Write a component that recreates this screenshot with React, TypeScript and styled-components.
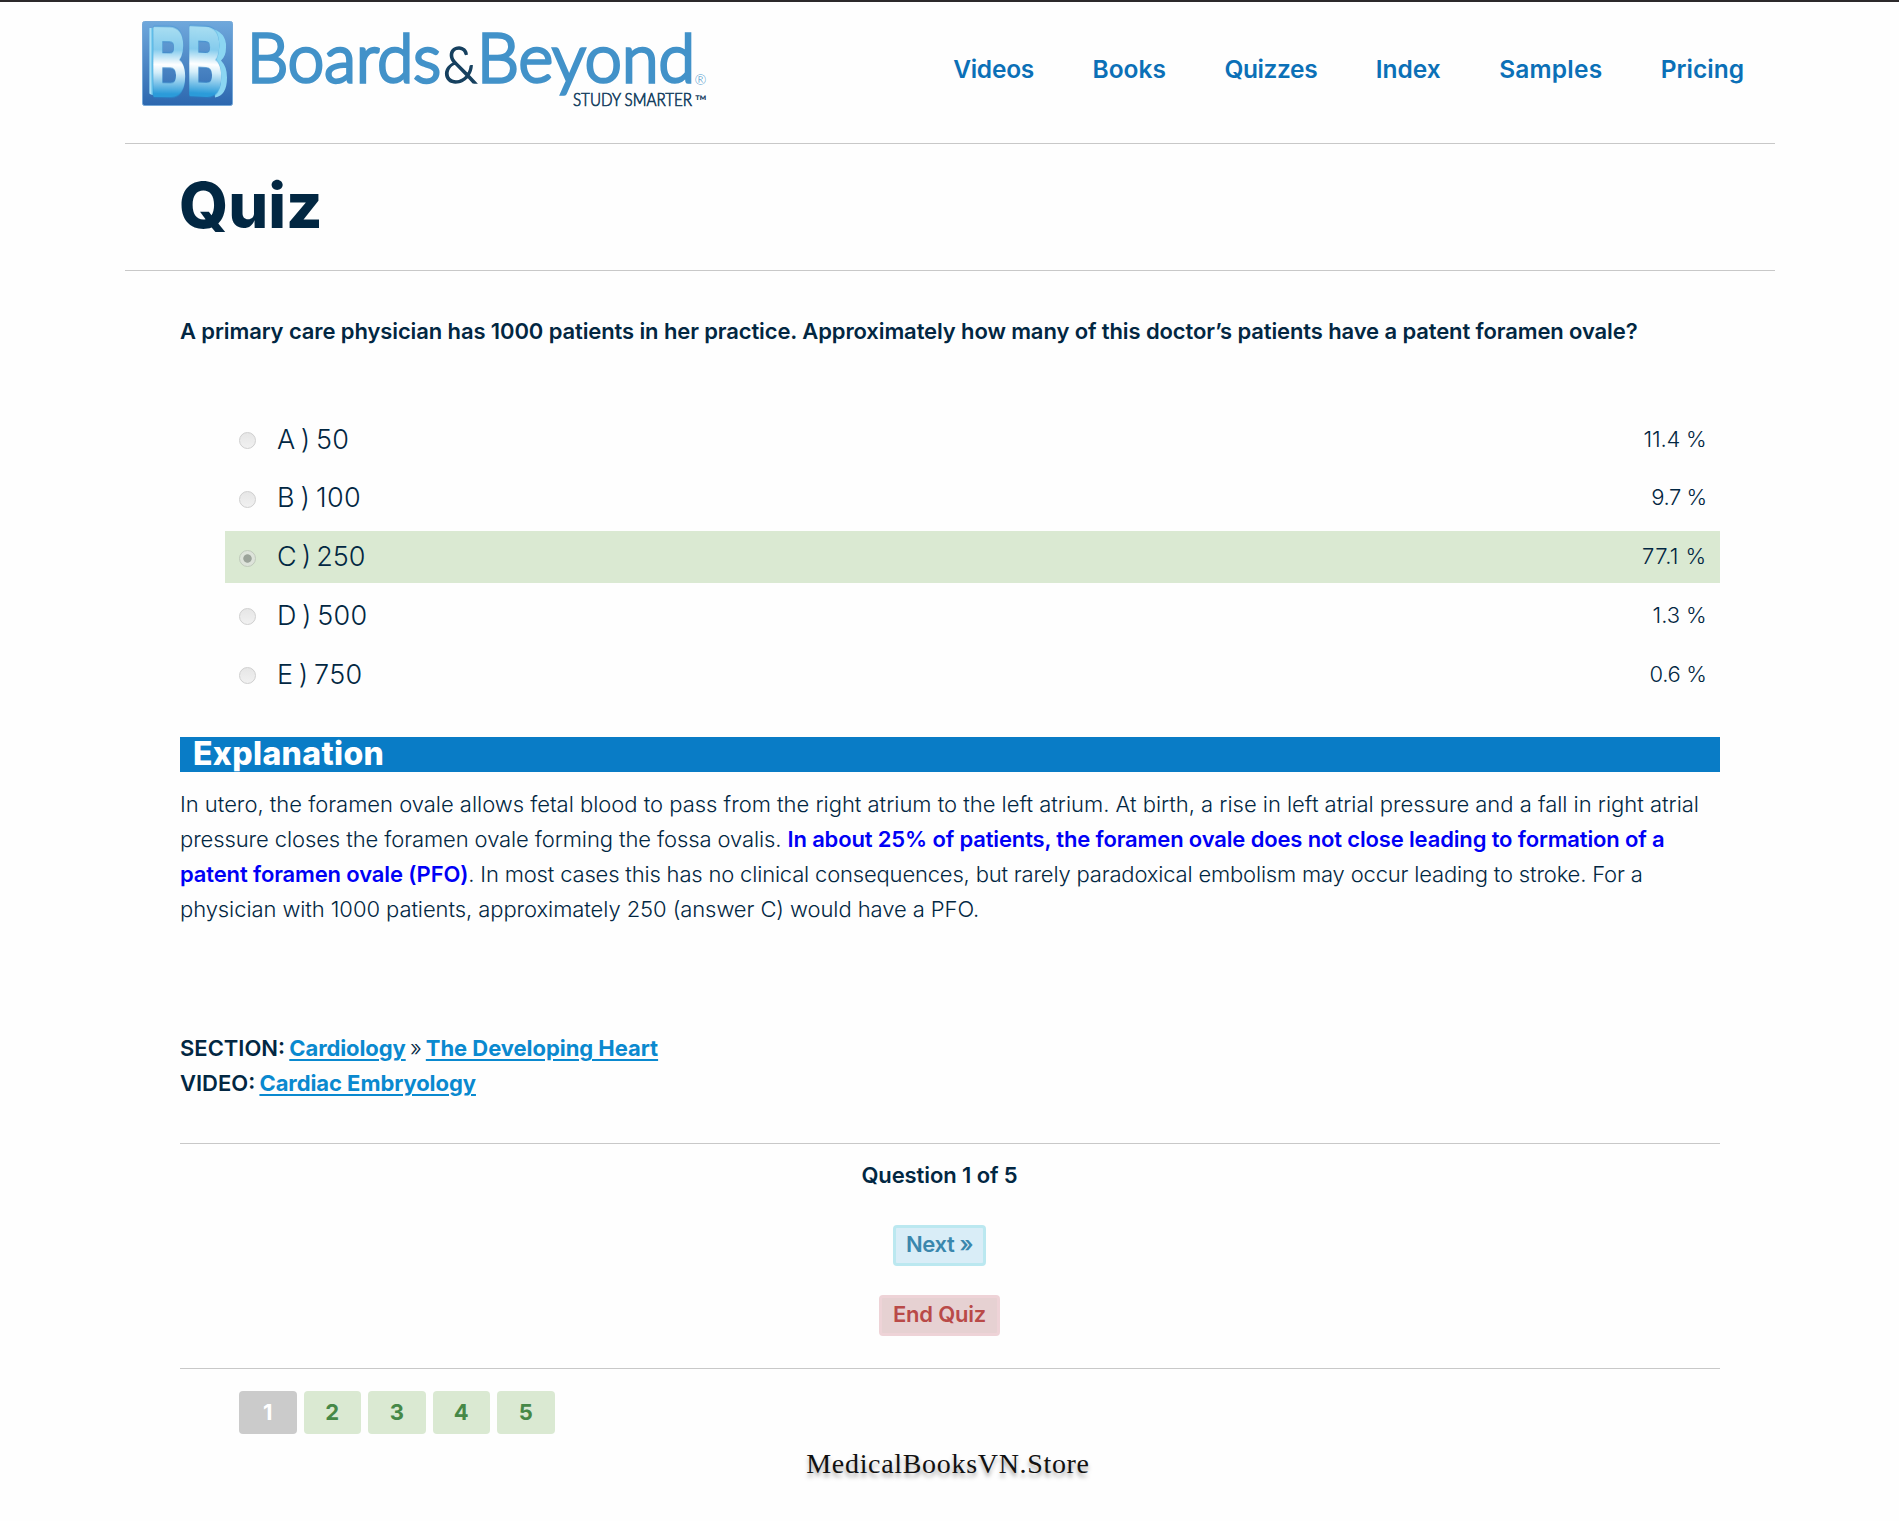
import React from "react";
import styled, { createGlobalStyle } from "styled-components";

const BODY_FONT = `Inter, "Open Sans", sans-serif`;
const HEAD_FONT = `Inter, Lato, sans-serif`;
const NAVY = "#022742";
const RULE = "#c8c8c8";

const GlobalStyle = createGlobalStyle`
  body { margin: 0; background: #fefefe; color: ${NAVY}; font: 300 22px/35px ${BODY_FONT}; }
  * { box-sizing: border-box; }
`;

const Page = styled.div`
  border-top: 2px solid #2c292b;
  min-height: 1521px;
  padding: 0 124px 0 125px;
`;

const Header = styled.header`
  display: flex;
  justify-content: space-between;
  height: 142px;
  padding: 0 31px 0 0;
  border-bottom: 1px solid ${RULE};
`;

const Logo = styled.svg`
  width: 600px;
  height: 130px;
  flex: none;
  overflow: visible;
`;

const Emblem = styled.text`
  font: 700 96px "Liberation Sans", sans-serif;
  stroke-width: 4px;
  stroke-linejoin: round;
  filter: drop-shadow(0 0 1px #1f86cb);
`;

const Nav = styled.nav`
  display: flex;
  gap: 58.5px;
  padding-top: 52px;
`;

const NavLink = styled.a<{ $track: number }>`
  font: 600 24.5px/30px ${HEAD_FONT};
  letter-spacing: ${(p) => p.$track}px;
  color: #0b70b7;
`;

const TitleBar = styled.section`
  height: 127px;
  padding: 23px 55px 0 54px;
  border-bottom: 1px solid ${RULE};
`;

const Title = styled.h1`
  margin: 0;
  font: 800 63px/76px ${HEAD_FONT};
`;

const Content = styled.main`
  padding: 43px 55px 0;
`;

const Text = styled.span<{ $track?: number }>`
  letter-spacing: ${(p) => p.$track ?? 0}px;
  white-space: pre;
`;

const Strong = styled(Text)`
  font-weight: 600;
`;

const Highlight = styled(Strong)`
  color: #0000f5;
`;

const Question = styled.p`
  margin: 0 0 64px;
`;

const Options = styled.div`
  display: grid;
  gap: 6.75px;
  padding-left: 45px;
`;

const Option = styled.label<{ $correct?: boolean }>`
  display: flex;
  align-items: center;
  height: 52px;
  padding: 0 13.5px 0 14px;
  background: ${(p) => (p.$correct ? "#dae9d2" : "transparent")};
`;

const Radio = styled.span<{ $on?: boolean }>`
  width: 17px;
  height: 17px;
  margin: 3px 21px 0 0;
  border: 1px solid ${(p) => (p.$on ? "#bfc9bb" : "#cfcfcf")};
  border-radius: 50%;
  background: ${(p) =>
    p.$on
      ? "radial-gradient(circle, #9ba39a 0 3.8px, #dde3da 4.6px)"
      : "linear-gradient(#e6e6e6, #f1f1f1)"};
`;

const Answer = styled.span<{ $track: number }>`
  flex: 1;
  font-size: 27px;
  letter-spacing: ${(p) => p.$track}px;
  word-spacing: -2.5px;
`;

const SectionHeading = styled.h2`
  height: 35px;
  margin: 37px 0 15px;
  padding-left: 13px;
  background: #097cc6;
  color: #fff;
  font: 800 32px/33px ${HEAD_FONT};
  letter-spacing: 0.35px;
`;

const Paragraph = styled.p`
  margin: 0;
`;

const Line = styled.span`
  display: block;
  white-space: pre;
`;

const Related = styled.div`
  margin: 104px 0 42px;
  word-spacing: -2px;
`;

const Link = styled.a<{ $track: number }>`
  font-weight: 700;
  color: #0a89cf;
  letter-spacing: ${(p) => p.$track}px;
  word-spacing: 0;
  text-decoration: underline 2px;
  text-underline-offset: 3px;
`;

const Controls = styled.div`
  display: flex;
  flex-direction: column;
  align-items: center;
  padding: 14px 21px 32px 0;
  border: solid ${RULE};
  border-width: 1px 0;
`;

const Button = styled.button<{ $tone: "info" | "danger"; $w: number; $track: number }>`
  width: ${(p) => p.$w}px;
  height: 41px;
  margin: ${(p) => (p.$tone === "info" ? "32px 0 29px" : "0")};
  padding: 0 0 2px;
  border: 3px solid ${(p) => (p.$tone === "info" ? "#bbe8f0" : "#eed3d7")};
  border-radius: 4px;
  background: ${(p) => (p.$tone === "info" ? "#d9edf7" : "#e6d1d2")};
  color: ${(p) => (p.$tone === "info" ? "#3a87ad" : "#b94a48")};
  font: 600 22px/33px ${BODY_FONT};
  letter-spacing: ${(p) => p.$track}px;
`;

const Pager = styled.div`
  display: flex;
  gap: 7px;
  padding: 22px 0 0 59px;
`;

const PageLink = styled.a<{ $current?: boolean }>`
  width: 57.5px;
  height: 43px;
  border-radius: 4px;
  background: ${(p) => (p.$current ? "#cbcbcb" : "#dae9d2")};
  color: ${(p) => (p.$current ? "#fff" : "#468847")};
  font-weight: 700;
  line-height: 42px;
  text-align: center;
`;

const Watermark = styled.footer`
  padding: 12px 4px 0 0;
  color: #111;
  font: 400 28px/36px "Liberation Serif", serif;
  letter-spacing: 0.68px;
  text-align: center;
  text-shadow: 0 4px 4px rgba(0, 0, 0, 0.35);
`;

const BrandLogo = () => (
  <Logo viewBox="125 2 600 130" role="img" aria-label="Boards and Beyond">
    <defs>
      <linearGradient id="tile" x1="0" y1="0" x2="0" y2="1">
        <stop offset="0" stopColor="#6fa8dc" />
        <stop offset="1" stopColor="#2c67af" />
      </linearGradient>
      <linearGradient id="face" gradientUnits="userSpaceOnUse" x1="0" y1="-66" x2="0" y2="2">
        <stop offset="0" stopColor="#a5dcf1" />
        <stop offset="0.3" stopColor="#84cbed" />
        <stop offset="0.52" stopColor="#ffffff" />
        <stop offset="0.64" stopColor="#d3edf9" />
        <stop offset="0.95" stopColor="#2b9bd9" />
      </linearGradient>
    </defs>
    <rect x="142.5" y="21.5" width="90" height="84" rx="2" fill="url(#tile)" stroke="#75a8d8" />
    <path d="M149.500 28h6v68.500l-6-3z" fill="#5fbde8" />
    <path d="M149.500 28h2v67l-2-1.500z" fill="#a9e0f6" />
    <path d="M208 27.500q19 4 18 20 0 9-5 13 6 6 6 17 0 18-12 20z" fill="#8bd6f2" />
    <Emblem transform="translate(151 95) skewY(1) scale(.51 1)" fill="url(#face)" stroke="url(#face)">
      B
    </Emblem>
    <Emblem transform="translate(187 94) skewY(3) scale(.51 1)" fill="url(#face)" stroke="url(#face)">
      B
    </Emblem>
    <g fontFamily="Lato" fill="#4292c9" stroke="#4292c9" strokeWidth="3.400" fontSize="67.500">
      <text x="247" y="82" textLength="194" lengthAdjust="spacingAndGlyphs">Boards</text>
      <text x="477" y="82" textLength="218" lengthAdjust="spacingAndGlyphs">Beyond</text>
    </g>
    <g fontFamily="Lato" fill="#16405f">
      <text x="443" y="83" fontSize="52" textLength="34" lengthAdjust="spacingAndGlyphs" stroke="#16405f" strokeWidth="1.500">&amp;</text>
      <text x="573" y="105.500" fontSize="17.500" textLength="119" lengthAdjust="spacingAndGlyphs" stroke="#16405f" strokeWidth=".7">
        STUDY SMARTER
      </text>
      <text x="695" y="105.500" fontSize="15" textLength="12" lengthAdjust="spacingAndGlyphs" stroke="#16405f" strokeWidth=".4">™</text>
      <text x="694.500" y="85" fontSize="14" fill="#4292c9" textLength="12" lengthAdjust="spacingAndGlyphs">®</text>
    </g>
  </Logo>
);

const NAV: [string, number][] = [
  ["Videos", -0.25],
  ["Books", 0],
  ["Quizzes", -0.4],
  ["Index", 0],
  ["Samples", 0.2],
  ["Pricing", 0],
];

const OPTIONS = [
  { label: "A ) 50", track: 0.3, share: "11.4 %", shareTrack: -0.2 },
  { label: "B ) 100", track: 0.45, share: "9.7 %", shareTrack: -0.5 },
  { label: "C ) 250", track: 0, share: "77.1 %", shareTrack: 0.4, correct: true },
  { label: "D ) 500", track: 0.3, share: "1.3 %", shareTrack: -0.1 },
  { label: "E ) 750", track: 0.35, share: "0.6 %", shareTrack: -0.35 },
];

export default function App() {
  return (
    <>
      <GlobalStyle />
      <Page>
        <Header>
          <BrandLogo />
          <Nav>
            {NAV.map(([name, track]) => (
              <NavLink key={name} $track={track}>
                {name}
              </NavLink>
            ))}
          </Nav>
        </Header>
        <TitleBar>
          <Title>Quiz</Title>
        </TitleBar>
        <Content>
          <Question>
            <Strong $track={-0.11}>
              A primary care physician has 1000 patients in her practice. Approximately how many of this doctor’s patients have a patent foramen ovale?
            </Strong>
          </Question>
          <Options>
            {OPTIONS.map((o) => (
              <Option key={o.label} $correct={o.correct}>
                <Radio $on={o.correct} />
                <Answer $track={o.track}>{o.label}</Answer>
                <Text $track={o.shareTrack}>{o.share}</Text>
              </Option>
            ))}
          </Options>
          <SectionHeading>Explanation</SectionHeading>
          <Paragraph>
            <Line>
              <Text $track={-0.02}>
                In utero, the foramen ovale allows fetal blood to pass from the right atrium to the left atrium. At birth, a rise in left atrial pressure and a fall in right atrial
              </Text>
            </Line>
            <Line>
              <Text $track={-0.1}>{"pressure closes the foramen ovale forming the fossa ovalis. "}</Text>
              <Highlight $track={-0.145}>
                In about 25% of patients, the foramen ovale does not close leading to formation of a
              </Highlight>
            </Line>
            <Line>
              <Highlight $track={-0.13}>patent foramen ovale (PFO)</Highlight>
              <Text $track={-0.18}>
                . In most cases this has no clinical consequences, but rarely paradoxical embolism may occur leading to stroke. For a
              </Text>
            </Line>
            <Line>
              <Text $track={-0.08}>physician with 1000 patients, approximately 250 (answer C) would have a PFO.</Text>
            </Line>
          </Paragraph>
          <Related>
            <Line>
              <Strong>SECTION:</Strong> <Link $track={-0.1}>Cardiology</Link> »{" "}
              <Link $track={-0.05}>The Developing Heart</Link>
            </Line>
            <Line>
              <Strong>VIDEO:</Strong> <Link $track={-0.07}>Cardiac Embryology</Link>
            </Line>
          </Related>
          <Controls>
            <Strong $track={-0.1}>Question 1 of 5</Strong>
            <Button $tone="info" $w={93} $track={-0.4}>
              Next »
            </Button>
            <Button $tone="danger" $w={121} $track={-0.2}>
              End Quiz
            </Button>
          </Controls>
          <Pager>
            {[1, 2, 3, 4, 5].map((n) => (
              <PageLink key={n} $current={n === 1}>
                {n}
              </PageLink>
            ))}
          </Pager>
        </Content>
        <Watermark>MedicalBooksVN.Store</Watermark>
      </Page>
    </>
  );
}
